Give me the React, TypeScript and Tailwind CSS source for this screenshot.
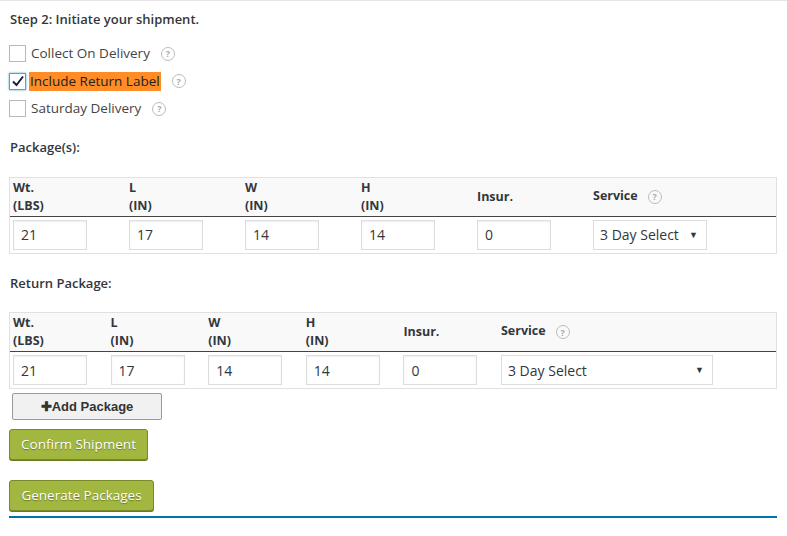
import React from "react";

const Help = ({ cls = "" }: { cls?: string }) => (
  <span className={"inline-flex items-center justify-center w-[14px] h-[14px] rounded-full border border-[#bbb] text-[9px] text-[#aaa] leading-none font-bold " + cls}>?</span>
);

const Box = ({ checked }: { checked?: boolean }) => (
  <span className={"inline-flex items-center justify-center w-[17px] h-[17px] border bg-white " + (checked ? "border-[#5b9dd9] shadow-[0_0_2px_rgba(30,140,190,0.8)]" : "border-[#b4b9be]")}>
    {checked && (
      <svg width="14" height="14" viewBox="0 0 14 14"><path d="M2 7.5 L5.5 11 L12 2.5" fill="none" stroke="#1e1e3c" strokeWidth="2" /></svg>
    )}
  </span>
);

const Inp = ({ v }: { v: string }) => (
  <div className="w-[74px] h-[30px] border border-[#ddd] shadow-[inset_0_1px_2px_rgba(0,0,0,0.07)] px-[7px] flex items-center text-[14px] text-[#32373c]">{v}</div>
);

function Table({ col, selW, top }: { col: number; selW: number; top: number }) {
  const heads = [["Wt.", "(LBS)"], ["L", "(IN)"], ["W", "(IN)"], ["H", "(IN)"]];
  const vals = ["21", "17", "14", "14"];
  return (
    <div className="ml-[9px] mr-[10px] border border-[#e1e1e1]" style={{ marginTop: top }}>
      <div className="flex bg-[#f9f9f9] h-[39px] border-b border-[#444] text-[12.5px] font-bold text-[#32373c] leading-[18px]">
        {heads.map((h) => (
          <div key={h[0]} className="pl-[3px] pt-[1px]" style={{ width: col }}>
            <div>{h[0]}</div>
            <div>{h[1]}</div>
          </div>
        ))}
        <div className="pl-[3px] pt-[10px]" style={{ width: col }}>Insur.</div>
        <div className="pl-[3px] pt-[9px] flex gap-[10px] items-start">Service <Help cls="mt-[3px]" /></div>
      </div>
      <div className="flex h-[36px] items-center">
        {vals.map((v, i) => (
          <div key={i} className="pl-[3px]" style={{ width: col }}><Inp v={v} /></div>
        ))}
        <div className="pl-[3px]" style={{ width: col }}><Inp v="0" /></div>
        <div className="pl-[3px]">
          <div className="h-[30px] border border-[#ddd] flex items-center justify-between pl-[6px] pr-[8px] text-[14px] text-[#32373c]" style={{ width: selW }}>
            <span>3 Day Select</span><span className="text-[9px]">▼</span>
          </div>
        </div>
      </div>
    </div>
  );
}

const Green = ({ t, w }: { t: string; w: number }) => (
  <div className="ml-[9px] h-[31px] rounded-[3px] bg-[#a2b740] border border-[#7a8a2a] shadow-[0_1px_0_#6b7a22] flex items-center justify-center text-white text-[13.5px] [text-shadow:0_1px_1px_rgba(0,0,0,0.35)]" style={{ width: w }}>{t}</div>
);

export default function App() {
  return (
    <div className="w-[787px] h-[536px] bg-white border-t border-[#e5e5e5] text-[#32373c] overflow-hidden" style={{ fontFamily: "'Open Sans', sans-serif" }}>
      <div className="pl-[10px] pt-[9px] text-[13px] font-semibold h-[32px]">Step 2: Initiate your shipment.</div>
      <div className="pl-[9px] text-[13.5px] text-[#444]">
        <div className="flex items-center h-[27px] mt-[7px]"><Box /><span className="ml-[5px]">Collect On Delivery</span><Help cls="ml-[11px]" /></div>
        <div className="flex items-center h-[28px]"><Box checked /><span className="ml-[3px] bg-[#ff8c26] text-[#222] px-[1px] h-[19px] leading-[19px]">Include Return Label</span><Help cls="ml-[11px]" /></div>
        <div className="flex items-center h-[27px]"><Box /><span className="ml-[5px]">Saturday Delivery</span><Help cls="ml-[11px]" /></div>
      </div>
      <div className="pl-[10px] mt-[16px] text-[13px] font-semibold">Package(s):</div>
      <Table col={116} selW={114} top={19} />
      <div className="pl-[10px] mt-[20px] text-[13px] font-semibold">Return Package:</div>
      <Table col={97.6} selW={212} top={19} />
      <div className="ml-[12px] mt-[4px] w-[150px] h-[27px] bg-[#f1f1f1] border border-[#999] rounded-[2px] flex items-center justify-center text-[13px] font-bold text-[#333]" style={{ fontFamily: "'Liberation Sans', sans-serif" }}>✚Add Package</div>
      <div className="mt-[9px]"><Green t="Confirm Shipment" w={139} /></div>
      <div className="mt-[20px]"><Green t="Generate Packages" w={145} /></div>
      <div className="ml-[9px] mr-[10px] mt-[5px] h-[2px] bg-[#0073aa]" />
    </div>
  );
}
